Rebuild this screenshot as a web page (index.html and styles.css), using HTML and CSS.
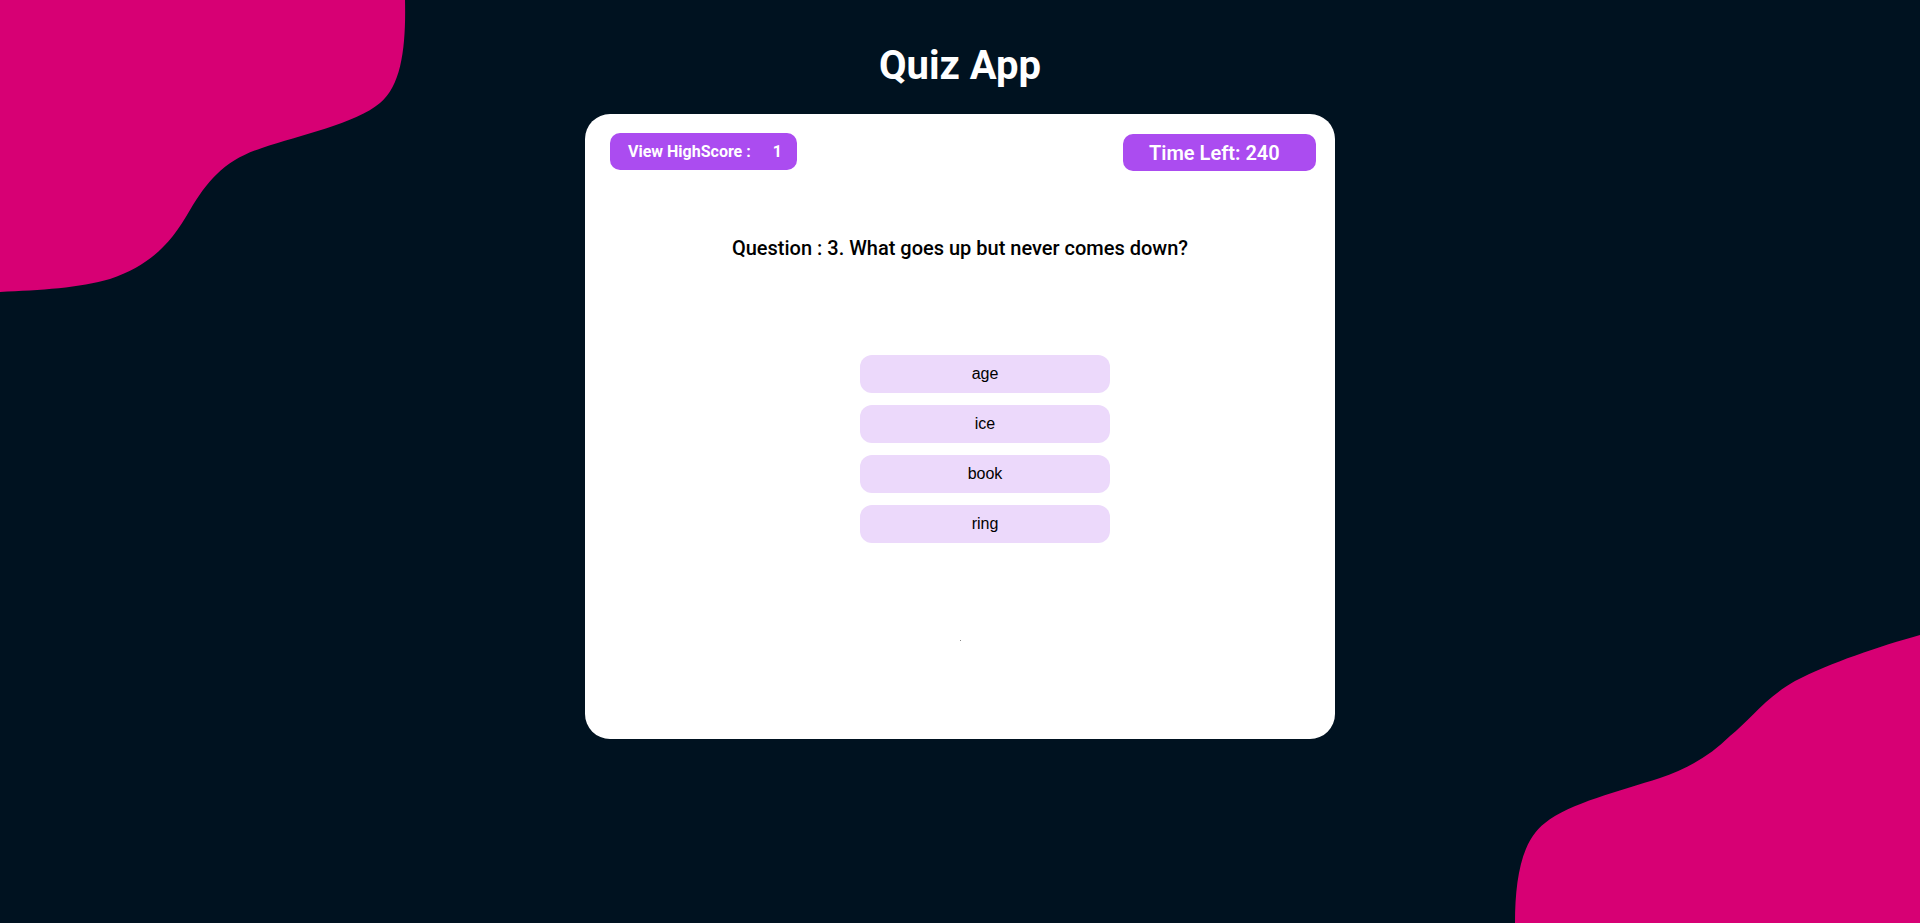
FILE: index.html
```html
<!DOCTYPE html>
<html lang="en">
<head>
<meta charset="utf-8">
<title>Quiz App</title>
<link rel="stylesheet" href="styles.css">
</head>
<body>
<svg class="blob blob-top" width="410" height="295" viewBox="0 0 410 295" aria-hidden="true">
  <path d="M0 0 H405 C406 45 402 85 380 103 C355 124 300 135 262 148 C225 160 208 180 190 210 C170 245 150 265 110 279 C80 288 40 290 0 292 Z" fill="#d70074"/>
</svg>
<svg class="blob blob-bottom" width="410" height="295" viewBox="0 0 410 295" aria-hidden="true">
  <path d="M410 7 C370 18 320 35 285 53 C255 70 240 92 220 108 C200 128 175 142 150 150 C110 163 60 175 35 195 C12 212 5 250 5 295 H410 Z" fill="#d70074"/>
</svg>
<main class="app">
  <h1 class="title">Quiz App</h1>
  <section class="card">
    <div class="card-head">
      <button class="pill pill-score">View HighScore :<span class="score">1</span></button>
      <div class="pill pill-time">Time Left: 240</div>
    </div>
    <h2 class="question">Question : 3. What goes up but never comes down?</h2>
    <ul class="options">
      <li><button class="option">age</button></li>
      <li><button class="option">ice</button></li>
      <li><button class="option">book</button></li>
      <li><button class="option">ring</button></li>
    </ul>
    <div class="result"><span class="dot"></span></div>
  </section>
</main>
</body>
</html>
```
FILE: styles.css
```css
* { box-sizing: border-box; }
html, body { height: 100%; }
body {
  margin: 0;
  background: #001220;
  font-family: Roboto, "Liberation Sans", sans-serif;
  overflow: hidden;
  position: relative;
}
.blob { position: absolute; display: block; z-index: 0; }
.blob-top { top: 0; left: 0; }
.blob-bottom { right: 0; bottom: 0; }
.app {
  position: relative;
  z-index: 1;
  display: flex;
  flex-direction: column;
  align-items: center;
}
.title {
  margin: 42px 0 25px;
  font-size: 40px;
  font-weight: 700;
  color: #ffffff;
  line-height: normal;
}
.card {
  width: 750px;
  height: 625px;
  background: #ffffff;
  border-radius: 25px;
  padding: 19px 19px 0 25px;
  display: flex;
  flex-direction: column;
}
.card-head {
  display: flex;
  justify-content: space-between;
  align-items: flex-start;
}
.pill {
  background: #ab4cf0;
  color: #ffffff;
  border: none;
  border-radius: 10px;
  height: 37px;
  display: flex;
  align-items: center;
  font-family: Roboto, "Liberation Sans", sans-serif;
  font-weight: 700;
}
.pill-score {
  width: 187px;
  padding: 0 0 0 18px;
  font-size: 16px;
}
.score { margin-left: 22px; }
.pill-time {
  width: 193px;
  margin-top: 1px;
  padding: 0 0 0 26px;
  font-size: 20px;
  font-weight: 600;
}
.question {
  margin: 65px 0 0;
  text-align: center;
  font-size: 20px;
  font-weight: 500;
  color: #000000;
  line-height: normal;
  padding-right: 6px;
}
.options {
  list-style: none;
  margin: 95px 0 0;
  padding: 0 0 0 44px;
  display: flex;
  flex-direction: column;
  align-items: center;
  gap: 12px;
}
.option {
  width: 250px;
  height: 38px;
  border: none;
  border-radius: 12px;
  background: #ecd9fb;
  color: #000000;
  font-family: "Liberation Sans", Arial, sans-serif;
  font-size: 16px;
  display: block;
}
.result {
  margin-top: 97px;
  display: flex;
  justify-content: center;
  padding-right: 6px;
}
.dot {
  width: 1px;
  height: 1px;
  background: #8a8a8a;
}
```
